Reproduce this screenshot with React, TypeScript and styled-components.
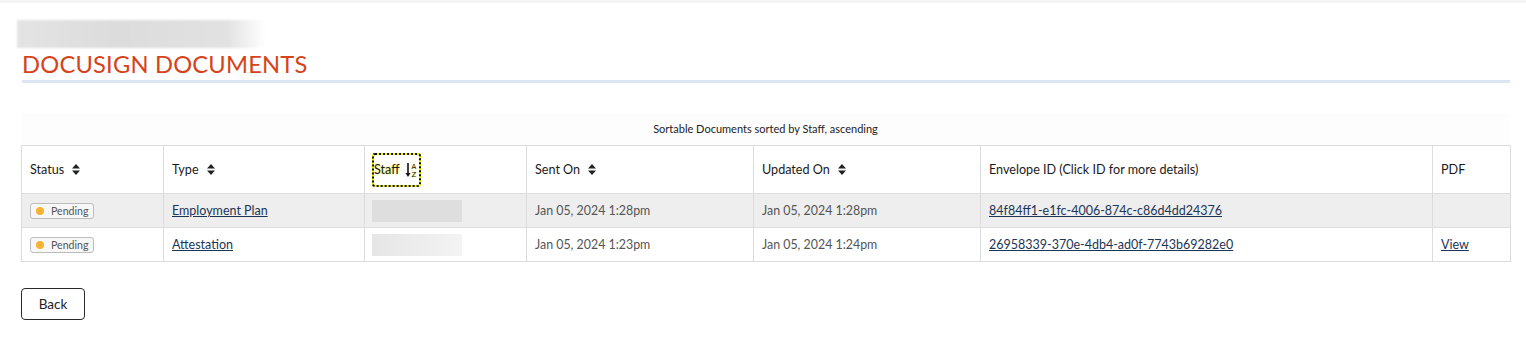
import React from 'react'
import styled, { createGlobalStyle } from 'styled-components'

const GlobalStyle = createGlobalStyle`
    body {
        margin: 0;
        background: #ffffff;
        font-family: 'Lato', 'Noto Sans', sans-serif;
        color: #222;
    }
`

const PageStyled = styled.div`
    border-top: 3px solid #f4f4f4;
    padding: 17px 16px 20px 21px;
`
const BlurredCrumbStyled = styled.div`
    width: 248px;
    height: 28px;
    margin-left: -4px;
    background: linear-gradient(90deg, #e4e4e4 0%, #dcdcdc 40%, #e2e2e2 85%, #ffffff 100%);
    filter: blur(1px);
`
const TitleStyled = styled.h1`
    margin: 3px 0 0 1px;
    font-size: 23.7px;
    font-weight: 400;
    letter-spacing: 0.2px;
    color: #d6431a;
    line-height: 26px;
    padding-bottom: 3px;
    border-bottom: 3px solid #dce5f2;
`
const TableAreaStyled = styled.div`
    margin-top: 30px;
    background: #fdfdfd;
`
const CaptionStyled = styled.div`
    text-align: center;
    font-size: 11px;
    line-height: 32px;
    color: #222;
`
const TableStyled = styled.table`
    width: 100%;
    table-layout: fixed;
    border-collapse: collapse;
    background: #fff;
    font-size: 12.4px;
`
const ColStyled = styled.col<{ $w: number }>`
    width: ${(p) => p.$w}px;
`
const HeadCellStyled = styled.th`
    height: 47px;
    padding: 0 8px;
    text-align: left;
    font-size: 12.6px;
    font-weight: 400;
    color: #1a1a1a;
    border: 1px solid #dcdcdc;
`
const RowStyled = styled.tr<{ $shade: boolean }>`
    background: ${(p) => (p.$shade ? '#eeeeee' : '#ffffff')};
`
const CellStyled = styled.td`
    height: 33px;
    padding: 0 8px;
    color: #555;
    border: 1px solid #dcdcdc;
`
const LinkStyled = styled.a`
    font-size: 12.5px;
    color: #1c3556;
    text-decoration: underline;
`
const SortLabelStyled = styled.span`
    display: inline-flex;
    align-items: center;
    gap: 8px;
`
const FocusedSortStyled = styled.span`
    display: inline-flex;
    align-items: center;
    gap: 5px;
    height: 30px;
    padding: 0 2px 0 0;
    margin-left: -1px;
    border: 2px solid #f2f200;
    outline: 2px dotted #111;
    outline-offset: -2px;
    border-radius: 3px;
    text-shadow: 0 0 2px #f0f000;
`
const BadgeStyled = styled.span`
    display: inline-flex;
    align-items: center;
    gap: 7px;
    height: 14px;
    padding: 0 5px;
    border: 1px solid #bcbcbc;
    border-radius: 3px;
    background: #f7f7f7;
    font-size: 10.6px;
    color: #555;
`
const DotStyled = styled.span`
    width: 8px;
    height: 8px;
    border-radius: 50%;
    background: #f9b233;
`
const BlurStyled = styled.div<{ $fade: boolean }>`
    width: 90px;
    height: 22px;
    margin-left: -1px;
    background: ${(p) => (p.$fade ? 'linear-gradient(90deg, #e6e6e6, #f3f3f3)' : '#dedede')};
`
const BackButtonStyled = styled.button`
    margin-top: 26px;
    width: 64px;
    height: 32px;
    border: 1px solid #2a2a2a;
    border-radius: 4px;
    background: #fff;
    font-family: inherit;
    font-size: 13.5px;
    color: #222;
`

const SortIcon = () => (
    <svg width="8" height="11" viewBox="0 0 8 11">
        <path d="M4 0 L8 4.5 H0 Z M4 11 L0 6.5 H8 Z" fill="#222" />
    </svg>
)

const SortAlphaIcon = () => (
    <svg width="12" height="18" viewBox="0 0 12 18">
        <path d="M3 2 V14" stroke="#111" strokeWidth="1.6" />
        <path d="M0.5 12 L3 16 L5.5 12 Z" fill="#111" />
        <text x="6.5" y="8" fontSize="7" fontFamily="DejaVu Sans" fill="#111">A</text>
        <text x="6.5" y="16" fontSize="7" fontFamily="DejaVu Sans" fill="#111">Z</text>
    </svg>
)

const columnWidths = [142, 201, 162, 227, 227, 452, 78]

const documents = [
    {
        type: 'Employment Plan',
        sent: 'Jan 05, 2024 1:28pm',
        updated: 'Jan 05, 2024 1:28pm',
        envelope: '84f84ff1-e1fc-4006-874c-c86d4dd24376',
        pdf: false,
    },
    {
        type: 'Attestation',
        sent: 'Jan 05, 2024 1:23pm',
        updated: 'Jan 05, 2024 1:24pm',
        envelope: '26958339-370e-4db4-ad0f-7743b69282e0',
        pdf: true,
    },
]

const App = () => {
    return (
        <PageStyled>
            <GlobalStyle />
            <BlurredCrumbStyled />
            <TitleStyled>DOCUSIGN DOCUMENTS</TitleStyled>

            <TableAreaStyled>
                <CaptionStyled>Sortable Documents sorted by Staff, ascending</CaptionStyled>
                <TableStyled>
                    <colgroup>
                        {columnWidths.map((w, i) => (
                            <ColStyled key={i} $w={w} />
                        ))}
                    </colgroup>
                    <thead>
                        <tr>
                            <HeadCellStyled>
                                <SortLabelStyled>Status <SortIcon /></SortLabelStyled>
                            </HeadCellStyled>
                            <HeadCellStyled>
                                <SortLabelStyled>Type <SortIcon /></SortLabelStyled>
                            </HeadCellStyled>
                            <HeadCellStyled>
                                <FocusedSortStyled>Staff <SortAlphaIcon /></FocusedSortStyled>
                            </HeadCellStyled>
                            <HeadCellStyled>
                                <SortLabelStyled>Sent On <SortIcon /></SortLabelStyled>
                            </HeadCellStyled>
                            <HeadCellStyled>
                                <SortLabelStyled>Updated On <SortIcon /></SortLabelStyled>
                            </HeadCellStyled>
                            <HeadCellStyled>Envelope ID (Click ID for more details)</HeadCellStyled>
                            <HeadCellStyled>PDF</HeadCellStyled>
                        </tr>
                    </thead>
                    <tbody>
                        {documents.map((doc, index) => (
                            <RowStyled key={doc.envelope} $shade={index % 2 === 0}>
                                <CellStyled>
                                    <BadgeStyled>
                                        <DotStyled />
                                        Pending
                                    </BadgeStyled>
                                </CellStyled>
                                <CellStyled>
                                    <LinkStyled href="#">{doc.type}</LinkStyled>
                                </CellStyled>
                                <CellStyled>
                                    <BlurStyled $fade={index % 2 === 1} />
                                </CellStyled>
                                <CellStyled>{doc.sent}</CellStyled>
                                <CellStyled>{doc.updated}</CellStyled>
                                <CellStyled>
                                    <LinkStyled href="#">{doc.envelope}</LinkStyled>
                                </CellStyled>
                                <CellStyled>{doc.pdf ? <LinkStyled href="#">View</LinkStyled> : ''}</CellStyled>
                            </RowStyled>
                        ))}
                    </tbody>
                </TableStyled>
            </TableAreaStyled>

            <BackButtonStyled>Back</BackButtonStyled>
        </PageStyled>
    )
}

export default App
